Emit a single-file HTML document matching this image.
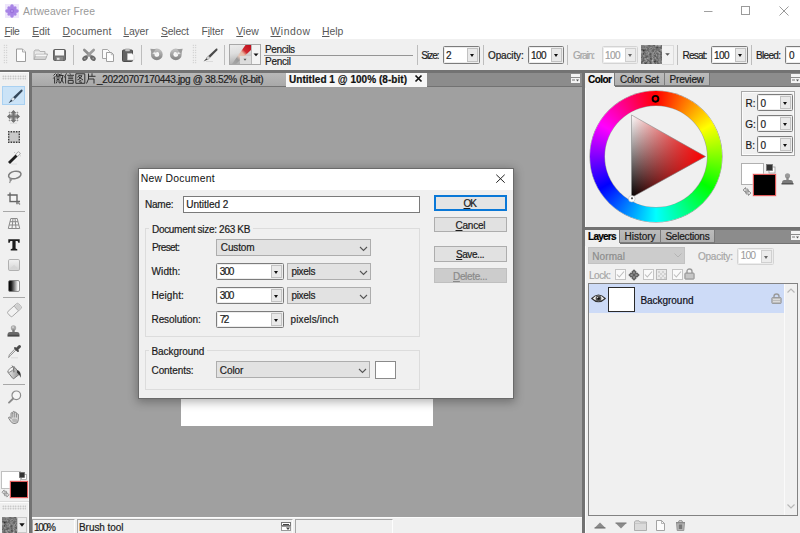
<!DOCTYPE html>
<html><head><meta charset="utf-8"><title>Artweaver Free</title>
<style>
*{box-sizing:border-box;margin:0;padding:0}
html,body{width:800px;height:533px;overflow:hidden;background:#fff}
body{font-family:"Liberation Sans",sans-serif;font-size:10px;color:#1c1c1c;position:relative}
.a{position:absolute}
.t{position:absolute;white-space:nowrap;-webkit-text-stroke:0.200px currentColor}
u{text-decoration:underline;text-underline-offset:0.500px;text-decoration-thickness:1px}
svg{position:absolute;overflow:visible}
.inp{position:absolute;background:#fff;border:1px solid #7c7c7c;border-radius:1.500px;box-shadow:inset 0 0 0 1px #ececec}
.inp i{position:absolute;right:1px;top:1px;bottom:1px;width:11px;background:#e9e9e9;border:1px solid #c2c2c2}
.inp i:after{content:"";position:absolute;left:1.700px;top:4.600px;border:2.800px solid transparent;border-top:3px solid #111;border-bottom:0}
.inp.dis{border-color:#d4d4d4}
.inp.dis i{background:#ececec;border-color:#d0d0d0}
.inp.dis i:after{border-top-color:#666}
.sep{position:absolute;top:45px;width:1px;height:20px;background:#bdbdbd}
.cb{position:absolute;background:#e2e2e2;border:1px solid #adadad}
.btn{position:absolute;background:#e1e1e1;border:1px solid #adadad}
.grp{position:absolute;border:1px solid #dcdcdc}
.tab{position:absolute;top:0;height:13px;margin-top:1px;background:linear-gradient(#bcbcbc,#b0b0b0);border-right:1px solid #787878;border-bottom:1px solid #7c7c7c;box-shadow:-1px 0 0 #7c7c7c}
.tab.on{background:#f0f0f0;border:0;height:14px;box-shadow:none}
.sf{border-top:1px solid #a6a6a6;border-left:1px solid #a6a6a6;border-right:1px solid #fdfdfd;background:#f0f0f0}
.grip{width:5px;height:20px;background-image:radial-gradient(circle,#bcbcbc 0.600px,transparent 0.850px);background-size:2.500px 2.500px;}
.ck{position:absolute;width:11px;height:11px;background:#fafafa;border:1px solid #c4c4c4}
.hgrip{height:5px;background-image:radial-gradient(circle,#b4b4b4 0.700px,transparent 0.900px);background-size:2.500px 2.500px}

</style></head><body>
<!-- ===== title bar ===== -->
<div class="a" style="left:0;top:0;width:800px;height:39px;background:#fff"></div>
<svg style="left:5px;top:4px" width="14" height="14" viewBox="0 0 14 14">
  <rect x="0" y="0" width="14" height="14" fill="#eee6fb"/>
  <g fill="#a884e6"><ellipse cx="7" cy="3.300" rx="1.900" ry="3"/><ellipse cx="7" cy="10.700" rx="1.900" ry="3"/><ellipse cx="3.300" cy="7" rx="3" ry="1.900"/><ellipse cx="10.700" cy="7" rx="3" ry="1.900"/>
  <ellipse cx="7" cy="3.600" rx="1.700" ry="2.700" transform="rotate(45 7 7)"/><ellipse cx="7" cy="3.600" rx="1.700" ry="2.700" transform="rotate(135 7 7)"/><ellipse cx="7" cy="3.600" rx="1.700" ry="2.700" transform="rotate(225 7 7)"/><ellipse cx="7" cy="3.600" rx="1.700" ry="2.700" transform="rotate(315 7 7)"/></g>
  <circle cx="7" cy="7" r="2.200" fill="#9a72dc"/><circle cx="7" cy="7" r="0.900" fill="#b99af0"/>
</svg>
<div class="t" style="left:23.00px;top:4.90px;font-size:10.4px;line-height:13px;color:#9a9a9a;letter-spacing:0.075px;-webkit-text-stroke:0;">Artweaver Free</div>
<!-- window controls -->
<svg style="left:700px;top:0" width="100" height="22" viewBox="0 0 100 22">
  <line x1="4" y1="11.500" x2="12.500" y2="11.500" stroke="#a0a0a0" stroke-width="1"/>
  <rect x="41.5" y="6.500" width="8" height="8" fill="none" stroke="#9a9a9a" stroke-width="1"/>
  <path d="M79.500 6.500 L88.500 15.500 M88.500 6.500 L79.500 15.500" stroke="#9a9a9a" stroke-width="1" fill="none"/>
</svg>
<!-- ===== menu ===== -->
<div class="t" style="left:4.50px;top:25.20px;font-size:10.4px;line-height:13px;color:#585858;letter-spacing:-0.489px;-webkit-text-stroke:0;"><u>F</u>ile</div>
<div class="t" style="left:32.20px;top:25.20px;font-size:10.4px;line-height:13px;color:#585858;letter-spacing:-0.041px;-webkit-text-stroke:0;"><u>E</u>dit</div>
<div class="t" style="left:62.60px;top:25.20px;font-size:10.4px;line-height:13px;color:#585858;letter-spacing:0.218px;-webkit-text-stroke:0;"><u>D</u>ocument</div>
<div class="t" style="left:123.40px;top:25.20px;font-size:10.4px;line-height:13px;color:#585858;letter-spacing:-0.200px;-webkit-text-stroke:0;"><u>L</u>ayer</div>
<div class="t" style="left:161.00px;top:25.20px;font-size:10.4px;line-height:13px;color:#585858;letter-spacing:-0.178px;-webkit-text-stroke:0;"><u>S</u>elect</div>
<div class="t" style="left:201.40px;top:25.20px;font-size:10.4px;line-height:13px;color:#585858;letter-spacing:-0.102px;-webkit-text-stroke:0;">F<u>i</u>lter</div>
<div class="t" style="left:236.30px;top:25.20px;font-size:10.4px;line-height:13px;color:#585858;letter-spacing:0.052px;-webkit-text-stroke:0;"><u>V</u>iew</div>
<div class="t" style="left:270.50px;top:25.20px;font-size:10.4px;line-height:13px;color:#585858;letter-spacing:0.506px;-webkit-text-stroke:0;"><u>W</u>indow</div>
<div class="t" style="left:322.00px;top:25.20px;font-size:10.4px;line-height:13px;color:#585858;letter-spacing:-0.030px;-webkit-text-stroke:0;"><u>H</u>elp</div>
<!-- ===== toolbar ===== -->
<div class="a" id="tb" style="left:0;top:39px;width:800px;height:31px;background:#f0f0f0"></div>
<!-- grips -->
<div class="a grip" style="left:3px;top:44px"></div>
<div class="a grip" style="left:192px;top:44px"></div>
<div class="sep" style="left:73px"></div>
<div class="sep" style="left:141px"></div>
<div class="sep" style="left:224px"></div>
<div class="sep" style="left:417px"></div>
<div class="sep" style="left:483px"></div>
<div class="sep" style="left:567px"></div>
<div class="sep" style="left:677px"></div>
<div class="sep" style="left:751px"></div>
<!-- new -->
<svg style="left:16px;top:48px" width="11" height="14" viewBox="0 0 11 14"><path d="M0.500 1 L6.500 1 L9.500 4 L9.500 13.500 L0.500 13.500 Z" fill="#fdfdfd" stroke="#9c9c9c" stroke-width="1"/><path d="M6.500 1 L6.500 4 L9.500 4" fill="#eee" stroke="#9c9c9c" stroke-width="0.800"/></svg>
<!-- open -->
<svg style="left:33px;top:49px" width="15" height="12" viewBox="0 0 15 12"><path d="M1 10.500 L1 2.500 L2 1 L6 1 L7 2.500 L12 2.500 L12 5" fill="#e0e0e0" stroke="#b4b4b4" stroke-width="1"/><path d="M1 10.500 L3 5 L14.500 5 L12.500 10.500 Z" fill="#d2d2d2" stroke="#aeaeae" stroke-width="1"/><path d="M2.500 6.300 L13.500 6.300" stroke="#f6f6f6" stroke-width="1.400"/><path d="M2 4 L11 4" stroke="#f4f4f4" stroke-width="1"/></svg>
<!-- save -->
<svg style="left:53px;top:49px" width="13" height="12" viewBox="0 0 13 12"><rect x="0.500" y="0.500" width="12" height="11" rx="1.200" fill="#747474" stroke="#606060" stroke-width="1"/><rect x="2" y="1" width="9" height="5.500" fill="#f6f6f6"/><rect x="3" y="8" width="7" height="3.500" fill="#8a8a8a"/><rect x="4" y="8.800" width="2.500" height="2" fill="#e0e0e0"/></svg>
<!-- cut -->
<svg style="left:82px;top:49px" width="14" height="12" viewBox="0 0 14 12"><path d="M2.300 1 L9.800 8" stroke="#8e8e8e" stroke-width="2.600" stroke-linecap="round"/><path d="M11.700 1 L4.200 8" stroke="#9c9c9c" stroke-width="2.600" stroke-linecap="round"/><ellipse cx="3" cy="9.200" rx="3" ry="2.300" transform="rotate(-40 3 9.200)" fill="#686868"/><ellipse cx="11" cy="9.200" rx="3" ry="2.300" transform="rotate(40 11 9.200)" fill="#686868"/><circle cx="2.800" cy="9.400" r="0.900" fill="#9c9c9c"/><circle cx="11.200" cy="9.400" r="0.900" fill="#9c9c9c"/></svg>
<!-- copy -->
<svg style="left:102px;top:49px" width="13" height="13" viewBox="0 0 13 13"><path d="M0.500 0.500 L5.500 0.500 L7.500 2.500 L7.500 9.500 L0.500 9.500 Z" fill="#fbfbfb" stroke="#a6a6a6" stroke-width="1"/><path d="M4.500 3.500 L9.500 3.500 L11.500 5.500 L11.500 12.500 L4.500 12.500 Z" fill="#fdfdfd" stroke="#a0a0a0" stroke-width="1"/><path d="M9.300 3.500 L9.300 5.700 L11.500 5.700" fill="none" stroke="#a0a0a0" stroke-width="0.700"/></svg>
<!-- paste -->
<svg style="left:122px;top:49px" width="13" height="13" viewBox="0 0 13 13"><rect x="0.500" y="1" width="10" height="11.500" rx="1" fill="#636363" stroke="#4c4c4c" stroke-width="1"/><rect x="3" y="0" width="5" height="2.200" rx="0.800" fill="#d0d0d0" stroke="#777" stroke-width="0.500"/><path d="M5.500 4.500 L10 4.500 L12 6.500 L12 11 L5.500 11 Z" fill="#fbfbfb" stroke="#c8c8c8" stroke-width="0.600"/></svg>
<!-- undo -->
<svg style="left:150px;top:47px" width="14" height="14" viewBox="0 0 14 14"><defs><linearGradient id="ug" x1="0" y1="0" x2="0" y2="1"><stop offset="0" stop-color="#bcbcbc"/><stop offset="1" stop-color="#8a8a8a"/></linearGradient></defs><circle cx="6.800" cy="7.400" r="4" fill="#f2f2f2" stroke="url(#ug)" stroke-width="3.800"/><path d="M6.800 5.600 A1.800 1.800 0 1 1 5 7.400" fill="none" stroke="#fafafa" stroke-width="1.300"/><path d="M0.300 1.800 L5.800 2.200 L1.800 7.200 Z" fill="#9c9c9c"/><path d="M2.200 6.200 L5.500 7.600 L5.200 5 Z" fill="#efefef"/></svg>
<!-- redo -->
<svg style="left:169px;top:47px" width="14" height="14" viewBox="0 0 14 14"><circle cx="6.800" cy="7.400" r="4" fill="#f2f2f2" stroke="url(#ug)" stroke-width="3.800"/><path d="M6.800 5.600 A1.800 1.800 0 1 0 8.600 7.400" fill="none" stroke="#fafafa" stroke-width="1.300"/><path d="M13.700 1.800 L8.200 2.200 L12.200 7.200 Z" fill="#9c9c9c"/><path d="M11.800 6.200 L8.500 7.600 L8.800 5 Z" fill="#efefef"/></svg>
<!-- brush -->
<svg style="left:203px;top:48px" width="15" height="14" viewBox="0 0 15 14"><path d="M14.200 0.600 L13.200 0.400 L5 8.200 L6.700 9.900 L14.600 1.900 Z" fill="#4a4a4a"/><path d="M5.300 7.900 L3.200 10 L4.900 11.700 L7 9.600 Z" fill="#d4d4d4" stroke="#8a8a8a" stroke-width="0.500"/><path d="M3.400 10.200 L0.600 13.600 L4.700 11.500 Z" fill="#444"/><path d="M3 13.500 L10 13.500" stroke="#d4d4d4" stroke-width="0.800"/></svg>

<!-- brush preset -->
<div class="a" style="left:229px;top:44px;width:32px;height:21px;border:1px solid #a8a8a8;background:#f4f4f4"></div>
<div class="a" style="left:230px;top:45px;width:21px;height:19px;background:linear-gradient(170deg,#ececec 0%,#dedede 40%,#a4a4a4 100%)"></div>
<svg style="left:230px;top:45px" width="21" height="19" viewBox="0 0 21 19">
  <defs><linearGradient id="pg" x1="20" y1="0" x2="2" y2="19" gradientUnits="userSpaceOnUse"><stop offset="0" stop-color="#c00f1e"/><stop offset="0.300" stop-color="#cf2a30"/><stop offset="0.420" stop-color="#e9b9a4"/><stop offset="0.600" stop-color="#e2c8bc"/><stop offset="0.720" stop-color="#9a9a9a"/><stop offset="1" stop-color="#a8a8a8"/></linearGradient></defs>
  <path d="M15.500 0 L21 0 L21 5 L6 19 L2 19 Z" fill="url(#pg)"/>
  <rect x="10" y="11" width="11" height="8" fill="#dcdcdc"/>
  <path d="M13.500 13.800 l3 0 l-1.500 2 z" fill="#555"/>
</svg>
<div class="a" style="left:251px;top:45px;width:1px;height:19px;background:#b8b8b8"></div>
<svg style="left:252px;top:45px" width="8" height="19" viewBox="0 0 8 19"><path d="M1.500 8.500 L6.500 8.500 L4 11.200 Z" fill="#111"/></svg>
<div class="t" style="left:265.00px;top:43.03px;font-size:10px;line-height:13px;color:#1c1c1c;letter-spacing:-0.375px;">Pencils</div>
<div class="t" style="left:265.00px;top:54.53px;font-size:10px;line-height:13px;color:#1c1c1c;letter-spacing:-0.250px;">Pencil</div>
<div class="a" style="left:264px;top:54.5px;width:149px;height:1px;background:#959595"></div>
<div class="t" style="left:421.30px;top:49.03px;font-size:10px;line-height:13px;color:#1c1c1c;letter-spacing:-1.009px;">Size:</div>
<div class="inp" style="left:443px;top:46px;width:37px;height:18px"><i></i></div>
<div class="t" style="left:446.00px;top:49.03px;font-size:10px;line-height:13px;color:#1c1c1c;">2</div>
<div class="t" style="left:488.00px;top:49.03px;font-size:10px;line-height:13px;color:#1c1c1c;letter-spacing:-0.134px;">Opacity:</div>
<div class="inp" style="left:528px;top:46px;width:36px;height:18px"><i></i></div>
<div class="t" style="left:531.00px;top:49.03px;font-size:10px;line-height:13px;color:#1c1c1c;letter-spacing:-0.594px;">100</div>
<div class="t" style="left:573.00px;top:49.03px;font-size:10px;line-height:13px;color:#a6a6a6;letter-spacing:-1.047px;">Grain:</div>
<div class="inp dis" style="left:602px;top:46px;width:36px;height:18px"><i></i></div>
<div class="t" style="left:605.00px;top:49.03px;font-size:10px;line-height:13px;color:#a0a0a0;letter-spacing:-0.594px;">100</div>
<svg style="left:0;top:0" width="0" height="0"><defs>
<filter id="nz" x="0" y="0" width="100%" height="100%" color-interpolation-filters="sRGB"><feTurbulence type="fractalNoise" baseFrequency="0.450" numOctaves="2" seed="7" result="n"/><feColorMatrix type="matrix" values="0.360 0.360 0.360 0 -0.070  0.360 0.360 0.360 0 -0.070  0.360 0.360 0.360 0 -0.070  0 0 0 0 1"/></filter></defs></svg>
<svg style="left:641px;top:45px" width="22" height="19" viewBox="0 0 22 19"><rect x="0" y="0" width="22" height="19" fill="#808080" filter="url(#nz)"/></svg>

<div class="a" style="left:662px;top:45px;width:12px;height:20px;border:1px solid #dcdcdc;border-left:0;background:#f2f2f2"></div><svg style="left:663px;top:45px" width="10" height="19" viewBox="0 0 10 19"><path d="M2.200 8.300 L6.800 8.300 L4.500 10.700 Z" fill="#555"/></svg>
<div class="t" style="left:682.50px;top:49.03px;font-size:10px;line-height:13px;color:#1c1c1c;letter-spacing:-0.781px;">Resat:</div>
<div class="inp" style="left:711px;top:46px;width:37px;height:18px"><i></i></div>
<div class="t" style="left:714.00px;top:49.03px;font-size:10px;line-height:13px;color:#1c1c1c;letter-spacing:-0.594px;">100</div>
<div class="t" style="left:756.00px;top:49.03px;font-size:10px;line-height:13px;color:#1c1c1c;letter-spacing:-0.672px;">Bleed:</div>
<div class="inp" style="left:785px;top:46px;width:37px;height:18px"><i></i></div>
<div class="t" style="left:789.00px;top:49.03px;font-size:10px;line-height:13px;color:#1c1c1c;">0</div>
<!-- ===== work area bg ===== -->
<div class="a" style="left:0;top:70px;width:800px;height:463px;background:#727272"></div>
<!-- toolbox -->
<div class="a" style="left:0;top:72px;width:29px;height:461px;background:#f0f0f0;border-right:1px solid #fafafa;border-top:1px solid #fbfbfb"></div>
<!-- doc tab bar -->
<div class="a" style="left:32px;top:73px;width:550px;height:13px;background:#8c8c8c"></div>
<div class="a" style="left:32px;top:73px;width:254px;height:13px;background:linear-gradient(#b8b8b8,#a8a8a8)"></div>
<div class="a" style="left:286px;top:73px;width:141px;height:14px;background:#f6f6f6"></div>
<!-- canvas -->
<div class="a" style="left:32px;top:87px;width:550px;height:430px;background:#a0a0a0"></div>
<div class="a" style="left:181px;top:176px;width:252px;height:250px;background:#fff"></div>
<svg style="left:53px;top:73px" width="44" height="11" viewBox="0 0 44 11" fill="none" stroke="#2a2a2a" stroke-width="0.950">
  <!-- wei -->
  <path d="M2.500 0.500 L0.500 2.500 M2.500 3 L0.300 5.500 M1.600 4.500 L1.600 10.500"/>
  <path d="M3.500 1 L3.500 3.300 L6.500 3.300 L6.500 1 M5 0.300 L5 3.300 M3.200 5 L6.800 5 M4 6.500 L4 8.500 L3.200 10.300 M4 6.500 L6 6.500 L6 9.800 L6.800 9.800"/>
  <path d="M8.200 0.500 L7.300 3.500 M7.800 2.500 L10.500 2.500 M9.800 2.500 L9.300 6 L7.200 10.300 M7.900 4.500 L10.500 10.300"/>
  <!-- xin -->
  <g transform="translate(11 0)"><path d="M2.500 0.300 L0.300 4.500 M1.600 3.300 L1.600 10.500 M5.800 0.300 L6.500 1.500 M3.300 2.300 L10 2.300 M4.200 4 L9.200 4 M4.200 5.700 L9.200 5.700 M4.200 7.400 L9.200 7.400 L9.200 10.300 L4.200 10.300 Z"/></g>
  <!-- tu -->
  <g transform="translate(22 0)"><path d="M0.800 0.800 L9.800 0.800 L9.800 10.300 L0.800 10.300 Z M4.500 2 L2.500 4.500 M4 2.800 L7 2.800 L5 5.500 L2.300 7 M3.800 4 L8 7 M4.500 7.300 L6.300 8 M3.800 8.600 L6.800 9.500"/></g>
  <!-- pian -->
  <g transform="translate(33 0)"><path d="M2.500 0.500 L2.500 6 L0.500 10.500 M2.500 3.300 L9.500 3.300 M6 0.300 L6 3.300 M2.500 6 L8 6 L8 10.500"/></g>
</svg>

<div class="t" style="left:97.00px;top:73.03px;font-size:10px;line-height:13px;color:#222;letter-spacing:-0.330px;">_20220707170443.jpg @ 38.52% (8-bit)</div>
<div class="t" style="left:289.00px;top:73.03px;font-size:10px;line-height:13px;color:#111;letter-spacing:0.042px;font-weight:bold;">Untitled 1 @ 100% (8-bit)</div>
<svg style="left:414px;top:74px" width="9" height="9" viewBox="0 0 9 9"><path d="M1.500 1.500 L7.500 7.500 M7.500 1.500 L1.500 7.500" stroke="#111" stroke-width="1.700" fill="none"/></svg>
<svg class="pm" style="left:571px;top:74px" width="9" height="9" viewBox="0 0 9 9"><rect x="0" y="0" width="9" height="3" fill="#f4f4f4"/><rect x="0" y="4" width="9" height="5" fill="#f4f4f4"/><rect x="1" y="5.500" width="3" height="1" fill="#777"/><path d="M5 5.500 l3 0 l-1.500 2 z" fill="#555"/></svg>
<!-- ===== status bar ===== -->
<div class="a" style="left:32px;top:517px;width:550px;height:16px;background:#f0f0f0;border-top:1px solid #fbfbfb"></div>
<div class="a sf" style="left:32px;top:519px;width:43px;height:14px"></div>
<div class="a sf" style="left:77px;top:519px;width:216px;height:14px"></div>
<div class="a sf" style="left:295px;top:519px;width:98px;height:14px"></div>
<div class="t" style="left:34.00px;top:520.74px;font-size:10px;line-height:13px;color:#1c1c1c;letter-spacing:-1.193px;">100%</div>
<div class="t" style="left:79.00px;top:520.74px;font-size:10px;line-height:13px;color:#1c1c1c;letter-spacing:-0.059px;">Brush tool</div>
<svg style="left:281px;top:522px" width="10" height="9" viewBox="0 0 10 9"><rect x="0.500" y="0.500" width="9" height="3" fill="#fff" stroke="#777" stroke-width="1"/><rect x="0.500" y="4.500" width="9" height="4" fill="#fff" stroke="#999" stroke-width="1"/><rect x="2" y="2" width="6" height="1" fill="#444"/><path d="M5 5.500 l4 0 l-2 2.500 z" fill="#444"/></svg>
<!-- ===== right panel: Color ===== -->
<div class="a" style="left:585px;top:73px;width:215px;height:13px;background:#8c8c8c"></div>
<div class="a" style="left:585px;top:87px;width:215px;height:140px;background:#f0f0f0;border-left:1px solid #fcfcfc"></div>
<div class="tab on" style="left:585px;top:72px;width:30px;height:15px"></div>
<div class="tab" style="left:615px;top:72px;width:50px"></div>
<div class="tab" style="left:665px;top:72px;width:45px"></div>
<div class="t" style="left:588.00px;top:73.03px;font-size:10px;line-height:13px;color:#000;letter-spacing:-0.527px;font-weight:bold;">Color</div>
<div class="t" style="left:620.00px;top:73.03px;font-size:10px;line-height:13px;color:#1a1a1a;letter-spacing:-0.336px;">Color Set</div>
<div class="t" style="left:669.50px;top:73.03px;font-size:10px;line-height:13px;color:#1a1a1a;letter-spacing:-0.180px;">Preview</div>
<svg class="pm" style="left:791px;top:74px" width="9" height="9" viewBox="0 0 9 9"><rect x="0" y="0" width="9" height="3" fill="#f4f4f4"/><rect x="0" y="4" width="9" height="5" fill="#f4f4f4"/><rect x="1" y="5.500" width="3" height="1" fill="#777"/><path d="M5 5.500 l3 0 l-1.500 2 z" fill="#555"/></svg>
<!-- wheel -->
<div class="a" style="left:589.500px;top:91.200px;width:132.300px;height:130.400px;border-radius:50%;background:conic-gradient(from 0deg,#ff0000,#ff8000 30deg,#ffff00 60deg,#80ff00 90deg,#00ff00 120deg,#00ff80 150deg,#00ffff 180deg,#0080ff 210deg,#0000ff 240deg,#8000ff 270deg,#ff00ff 300deg,#ff0080 330deg,#ff0000 360deg);box-shadow:0 0 0 0.500px #8a8a8a"></div>
<div class="a" style="left:604.600px;top:106.300px;width:102px;height:101.200px;border-radius:50%;background:#f0f0f0;box-shadow:0 0 0 0.500px #9a9a9a"></div>
<svg style="left:585px;top:86px" width="140" height="140" viewBox="585 86 140 140">
  <defs>
    <linearGradient id="gv" x1="0" y1="115" x2="0" y2="197" gradientUnits="userSpaceOnUse"><stop offset="0" stop-color="#fff"/><stop offset="1" stop-color="#000"/></linearGradient>
    <linearGradient id="gh" x1="631" y1="0" x2="705" y2="0" gradientUnits="userSpaceOnUse"><stop offset="0" stop-color="#ff0000" stop-opacity="0"/><stop offset="1" stop-color="#ff0000" stop-opacity="1"/></linearGradient>
  </defs>
  <polygon points="631.500,115 705.500,156.500 631.500,197.500" fill="url(#gv)"/>
  <polygon points="631.500,115 705.500,156.500 631.500,197.500" fill="url(#gh)"/>
  <polygon points="631.500,115 705.500,156.500 631.500,197.500" fill="none" stroke="#8a8a8a" stroke-width="0.600"/>
  <circle cx="655.500" cy="98.800" r="2.900" fill="none" stroke="#000" stroke-width="1.900"/>
  <circle cx="631.800" cy="198.800" r="3.300" fill="#fff" stroke="#b0b0b0" stroke-width="0.500"/>
  <circle cx="632" cy="198.300" r="1.100" fill="#555"/>
</svg>
<!-- RGB box -->
<div class="a" style="left:741px;top:91px;width:54px;height:65px;border:1px solid #a8a8a8;box-shadow:inset 0 0 0 1px #fbfbfb"></div>
<div class="inp" style="left:757px;top:94px;width:36px;height:17px"><i></i></div>
<div class="inp" style="left:757px;top:115px;width:36px;height:17px"><i></i></div>
<div class="inp" style="left:757px;top:136px;width:36px;height:17px"><i></i></div>
<div class="t" style="left:745.60px;top:96.83px;font-size:10px;line-height:13px;color:#1c1c1c;">R:</div>
<div class="t" style="left:745.20px;top:117.83px;font-size:10px;line-height:13px;color:#1c1c1c;">G:</div>
<div class="t" style="left:745.60px;top:138.84px;font-size:10px;line-height:13px;color:#1c1c1c;">B:</div>
<div class="t" style="left:760.50px;top:96.83px;font-size:10px;line-height:13px;color:#1c1c1c;">0</div>
<div class="t" style="left:760.50px;top:117.83px;font-size:10px;line-height:13px;color:#1c1c1c;">0</div>
<div class="t" style="left:760.50px;top:138.84px;font-size:10px;line-height:13px;color:#1c1c1c;">0</div>
<!-- swatches -->
<div class="a" style="left:741px;top:163px;width:23px;height:22px;background:#fff;border:1px solid #b0b0b0"></div>
<div class="a" style="left:753px;top:174px;width:23px;height:22px;background:#000;border:1px solid #e05a5a;box-shadow:0 0 0 0.500px #f0c0c0"></div>
<svg style="left:766px;top:164px" width="9" height="9" viewBox="0 0 9 9"><rect x="3" y="3" width="6" height="6" fill="#fff" stroke="#999" stroke-width="0.800"/><rect x="0.500" y="0.500" width="6" height="6" fill="#333" stroke="#777" stroke-width="0.800"/></svg>
<svg style="left:742px;top:187px" width="10" height="9" viewBox="0 0 10 9"><path d="M1 3 L3.500 0.500 L3.500 2 L6 2 L6 4 L3.500 4 L3.500 5.500 Z" fill="#d8d8d8" stroke="#777" stroke-width="0.700"/><path d="M9 6 L6.500 8.500 L6.500 7 L4 7 L4 5 L6.500 5 L6.500 3.500 Z" fill="#d8d8d8" stroke="#777" stroke-width="0.700"/></svg>
<svg style="left:781px;top:173px" width="13" height="12" viewBox="0 0 13 12"><circle cx="6.500" cy="2.800" r="2.600" fill="#9a9a9a"/><rect x="5.300" y="4" width="2.400" height="4" fill="#8a8a8a"/><path d="M1 10 Q1 7 3.500 7 L9.500 7 Q12 7 12 10 Z" fill="#7a7a7a"/><rect x="0.500" y="10" width="12" height="1.500" fill="#555"/></svg>
<!-- ===== right panel: Layers ===== -->
<div class="a" style="left:585px;top:230px;width:215px;height:13px;background:#8c8c8c"></div>
<div class="a" style="left:585px;top:244px;width:215px;height:289px;background:#f0f0f0;border-left:1px solid #fcfcfc"></div>
<div class="tab on" style="left:585px;top:229px;width:35px;height:16px"></div>
<div class="tab" style="left:620px;top:229px;width:41px"></div>
<div class="tab" style="left:661px;top:229px;width:54px"></div>
<div class="t" style="left:588.00px;top:229.94px;font-size:10px;line-height:13px;color:#000;letter-spacing:-0.730px;font-weight:bold;">Layers</div>
<div class="t" style="left:624.60px;top:229.94px;font-size:10px;line-height:13px;color:#1a1a1a;letter-spacing:-0.021px;">History</div>
<div class="t" style="left:665.40px;top:229.94px;font-size:10px;line-height:13px;color:#1a1a1a;letter-spacing:-0.205px;">Selections</div>
<svg class="pm" style="left:791px;top:231px" width="9" height="9" viewBox="0 0 9 9"><rect x="0" y="0" width="9" height="3" fill="#f4f4f4"/><rect x="0" y="4" width="9" height="5" fill="#f4f4f4"/><rect x="1" y="5.500" width="3" height="1" fill="#777"/><path d="M5 5.500 l3 0 l-1.500 2 z" fill="#555"/></svg>
<div class="a" style="left:588px;top:247px;width:97px;height:17px;background:#cccccc;border:1px solid #c2c2c2"></div>
<svg style="left:674px;top:253px" width="8" height="5" viewBox="0 0 8 5"><path d="M0.500 0.500 L4 4 L7.500 0.500" fill="none" stroke="#b4b4b4" stroke-width="1"/></svg>
<div class="t" style="left:592.20px;top:250.03px;font-size:10px;line-height:13px;color:#8c8c8c;letter-spacing:0.113px;">Normal</div>
<div class="t" style="left:698.00px;top:250.03px;font-size:10px;line-height:13px;color:#a6a6a6;letter-spacing:-0.241px;">Opacity:</div>
<div class="inp dis" style="left:737px;top:248px;width:37px;height:17px"><i></i></div>
<div class="t" style="left:740.60px;top:249.40px;font-size:10.4px;line-height:13px;color:#9a9a9a;letter-spacing:-0.922px;-webkit-text-stroke:0;">100</div>
<div class="t" style="left:589.00px;top:268.54px;font-size:10px;line-height:13px;color:#a6a6a6;letter-spacing:-0.477px;">Lock:</div>
<div class="ck" style="left:615px;top:269px"></div><svg style="left:615px;top:269px" width="11" height="11" viewBox="0 0 11 11"><path d="M2 5.500 L4.300 8 L9 2.500" fill="none" stroke="#bdbdbd" stroke-width="1.100"/></svg>
<div class="ck" style="left:643px;top:269px"></div><svg style="left:643px;top:269px" width="11" height="11" viewBox="0 0 11 11"><path d="M2 5.500 L4.300 8 L9 2.500" fill="none" stroke="#bdbdbd" stroke-width="1.100"/></svg>
<div class="ck" style="left:672px;top:269px"></div><svg style="left:672px;top:269px" width="11" height="11" viewBox="0 0 11 11"><path d="M2 5.500 L4.300 8 L9 2.500" fill="none" stroke="#bdbdbd" stroke-width="1.100"/></svg>
<svg style="left:627.500px;top:268.500px" width="12" height="12" viewBox="0 0 12 12"><path d="M6 0.300 L11.700 6 L6 11.700 L0.300 6 Z" fill="#5e5e5e"/><path d="M6 2.600 L6 9.400 M2.600 6 L9.400 6" stroke="#bdbdbd" stroke-width="1"/><circle cx="6" cy="6" r="1.400" fill="#5e5e5e"/><path d="M4.100 4.100 L3.300 3.300 M7.900 4.100 L8.700 3.300 M4.100 7.900 L3.300 8.700 M7.900 7.900 L8.700 8.700" stroke="#d8d8d8" stroke-width="0.900"/></svg>
<svg style="left:656px;top:269px" width="11" height="11" viewBox="0 0 11 11"><rect x="0.500" y="0.500" width="10" height="10" fill="#e9e9e9" stroke="#b8b8b8"/><path d="M2 2h2v2h-2z M6 2h2v2h-2z M4 4h2v2h-2z M8 4h2v2h-2z M2 6h2v2h-2z M6 6h2v2h-2z M4 8h2v2h-2z M8 8h2v2h-2z" fill="#d2d2d2"/></svg>
<svg style="left:684px;top:268px" width="11" height="12" viewBox="0 0 11 12"><path d="M3 5 L3 3.500 Q3 1 5.500 1 Q8 1 8 3.500 L8 5" fill="none" stroke="#9c9c9c" stroke-width="1.400"/><rect x="0.800" y="5" width="9.400" height="6.200" rx="0.800" fill="#b8b8b8" stroke="#8e8e8e" stroke-width="0.800"/><path d="M2 7 L9 7 M2 9 L9 9" stroke="#dcdcdc" stroke-width="0.800"/></svg>

<!-- layer list -->
<div class="a" style="left:588px;top:283px;width:210px;height:233px;background:#f0f0f0;border:1px solid #828282"></div>
<div class="a" style="left:589px;top:284px;width:195px;height:29px;background:#cddbf7"></div>
<div class="a" style="left:784px;top:284px;width:1px;height:231px;background:#fafafa"></div>
<div class="a" style="left:608px;top:287px;width:27px;height:25px;background:#fff;border:1px solid #2a2a2a"></div>
<div class="t" style="left:640.40px;top:293.54px;font-size:10px;line-height:13px;color:#10101a;letter-spacing:-0.031px;">Background</div>
<svg style="left:787px;top:288px" width="8" height="5" viewBox="0 0 8 5"><path d="M0.500 4.500 L4 1 L7.500 4.500" fill="none" stroke="#b8b8b8" stroke-width="1.200"/></svg>
<svg style="left:787px;top:504px" width="8" height="5" viewBox="0 0 8 5"><path d="M0.500 0.500 L4 4 L7.500 0.500" fill="none" stroke="#b8b8b8" stroke-width="1.200"/></svg>
<!-- eye -->
<svg style="left:591px;top:293px" width="15" height="11" viewBox="0 0 15 11"><path d="M0.800 5.500 Q7.500 -1.500 14.200 5.500 Q7.500 12 0.800 5.500 Z" fill="#f4f4f4" stroke="#333" stroke-width="1.100"/><circle cx="7.500" cy="5.500" r="2.900" fill="#555"/><circle cx="7.500" cy="5.500" r="1.300" fill="#111"/><circle cx="6.600" cy="4.600" r="0.700" fill="#ddd"/></svg>
<!-- row lock -->
<svg style="left:771px;top:293px" width="11" height="11" viewBox="0 0 11 11"><path d="M3 4.500 L3 3.300 Q3 1 5.500 1 Q8 1 8 3.300 L8 4.500" fill="none" stroke="#9a9a9a" stroke-width="1.400"/><rect x="0.800" y="4.500" width="9.400" height="6" rx="0.800" fill="#bcbcbc" stroke="#909090" stroke-width="0.800"/><path d="M2 6.500 L9 6.500 M2 8.500 L9 8.500" stroke="#e2e2e2" stroke-width="0.800"/></svg>
<!-- bottom icons -->
<svg style="left:594px;top:522px" width="12" height="7" viewBox="0 0 12 7"><path d="M6 0.500 L11.500 6 L0.500 6 Z" fill="#8a8a8a"/><path d="M0.500 6 L11.500 6" stroke="#666" stroke-width="1"/></svg>
<svg style="left:615px;top:522px" width="12" height="7" viewBox="0 0 12 7"><path d="M6 6.500 L11.500 1 L0.500 1 Z" fill="#8a8a8a"/><path d="M0.500 1 L11.500 1" stroke="#777" stroke-width="1"/></svg>
<svg style="left:634px;top:520px" width="13" height="11" viewBox="0 0 13 11"><path d="M0.500 10.500 L0.500 2 L1.500 0.800 L5 0.800 L6 2 L12.500 2 L12.500 10.500 Z" fill="#dadada" stroke="#a8a8a8" stroke-width="0.900"/><path d="M0.500 3.500 L12.500 3.500" stroke="#c0c0c0" stroke-width="0.700"/></svg>
<svg style="left:656px;top:520px" width="9" height="11" viewBox="0 0 9 11"><path d="M0.500 0.500 L5.500 0.500 L8.500 3.500 L8.500 10.500 L0.500 10.500 Z" fill="#fcfcfc" stroke="#9a9a9a" stroke-width="0.900"/><path d="M5.500 0.500 L5.500 3.500 L8.500 3.500" fill="none" stroke="#9a9a9a" stroke-width="0.700"/></svg>
<svg style="left:675px;top:520px" width="11" height="11" viewBox="0 0 11 11"><path d="M1 2.500 L10 2.500 M3.500 2.500 L4 0.800 L7 0.800 L7.500 2.500" fill="none" stroke="#888" stroke-width="1"/><path d="M1.500 3 L2.200 10.500 L8.800 10.500 L9.500 3 Z" fill="#b4b4b4" stroke="#8a8a8a" stroke-width="0.800"/><rect x="3.800" y="4.500" width="3.400" height="4.500" fill="#777"/></svg>

<!-- ===== dialog ===== -->
<div class="a" style="left:138px;top:168px;width:376px;height:231px;background:#f0f0f0;border:1px solid #6a6a6a;box-shadow:0 2px 9px 1px rgba(0,0,0,0.30)"></div>
<div class="a" style="left:139px;top:169px;width:374px;height:21px;background:#fff"></div>
<div class="t" style="left:140.70px;top:171.90px;font-size:10.4px;line-height:13px;color:#111;letter-spacing:0.270px;-webkit-text-stroke:0;">New Document</div>
<svg style="left:495px;top:174px" width="11" height="10" viewBox="0 0 11 10"><path d="M1.300 0.700 L9.700 8.700 M9.700 0.700 L1.300 8.700" stroke="#222" stroke-width="1" fill="none"/></svg>
<div class="t" style="left:145.00px;top:198.13px;font-size:10px;line-height:13px;color:#1c1c1c;letter-spacing:-0.238px;">Name:</div>
<div class="a" style="left:183px;top:196px;width:237px;height:17px;background:#fff;border:1px solid #7a7a7a"></div>
<div class="t" style="left:186.30px;top:198.13px;font-size:10px;line-height:13px;color:#1c1c1c;letter-spacing:-0.028px;">Untitled 2</div>
<div class="btn" style="left:434px;top:195px;width:73px;height:16px;border:2px solid #0a78d7;background:#e4e4e4"></div>
<div class="btn" style="left:434px;top:217px;width:73px;height:15px"></div>
<div class="btn" style="left:434px;top:246px;width:73px;height:16px"></div>
<div class="btn" style="left:434px;top:268px;width:73px;height:15px;background:#cccccc;border-color:#bfbfbf"></div>
<div class="t" style="left:463.50px;top:197.03px;font-size:10px;line-height:13px;color:#1c1c1c;letter-spacing:-0.953px;"><u>O</u>K</div>
<div class="t" style="left:455.50px;top:218.84px;font-size:10px;line-height:13px;color:#1c1c1c;letter-spacing:-0.228px;"><u>C</u>ancel</div>
<div class="t" style="left:456.00px;top:248.03px;font-size:10px;line-height:13px;color:#1c1c1c;letter-spacing:-0.440px;"><u>S</u>ave...</div>
<div class="t" style="left:453.00px;top:269.54px;font-size:10px;line-height:13px;color:#8a8a8a;letter-spacing:-0.346px;"><u>D</u>elete...</div>
<!-- group 1 -->
<div class="grp" style="left:145px;top:228px;width:275px;height:109px"></div>
<div class="a" style="left:149px;top:224px;width:104px;height:10px;background:#f0f0f0"></div>
<div class="t" style="left:152.00px;top:222.53px;font-size:10px;line-height:13px;color:#1c1c1c;letter-spacing:-0.305px;">Document size: 263 KB</div>
<div class="t" style="left:152.00px;top:241.34px;font-size:10px;line-height:13px;color:#1c1c1c;letter-spacing:-0.615px;">Preset:</div>
<div class="cb" style="left:216px;top:239px;width:155px;height:17px"></div>
<div class="t" style="left:220.80px;top:241.34px;font-size:10px;line-height:13px;color:#1c1c1c;letter-spacing:-0.131px;">Custom</div>
<div class="t" style="left:151.50px;top:265.04px;font-size:10px;line-height:13px;color:#1c1c1c;letter-spacing:0.111px;">Width:</div>
<div class="inp" style="left:216px;top:263px;width:68px;height:17px"><i></i></div>
<div class="t" style="left:219.80px;top:264.94px;font-size:10px;line-height:13px;color:#1c1c1c;letter-spacing:-1.044px;">300</div>
<div class="cb" style="left:287px;top:263px;width:84px;height:17px"></div>
<div class="t" style="left:291.40px;top:265.24px;font-size:10px;line-height:13px;color:#1c1c1c;letter-spacing:-0.316px;">pixels</div>
<div class="t" style="left:151.50px;top:288.94px;font-size:10px;line-height:13px;color:#1c1c1c;letter-spacing:0.102px;">Height:</div>
<div class="inp" style="left:216px;top:287px;width:68px;height:17px"><i></i></div>
<div class="t" style="left:219.80px;top:288.84px;font-size:10px;line-height:13px;color:#1c1c1c;letter-spacing:-1.044px;">300</div>
<div class="cb" style="left:287px;top:287px;width:84px;height:17px"></div>
<div class="t" style="left:291.40px;top:289.14px;font-size:10px;line-height:13px;color:#1c1c1c;letter-spacing:-0.316px;">pixels</div>
<div class="t" style="left:151.50px;top:313.14px;font-size:10px;line-height:13px;color:#1c1c1c;letter-spacing:-0.083px;">Resolution:</div>
<div class="inp" style="left:216px;top:311px;width:68px;height:17px"><i></i></div>
<div class="t" style="left:219.80px;top:313.14px;font-size:10px;line-height:13px;color:#1c1c1c;letter-spacing:-1.525px;">72</div>
<div class="t" style="left:290.50px;top:313.14px;font-size:10px;line-height:13px;color:#1c1c1c;letter-spacing:0.130px;">pixels/inch</div>
<!-- group 2 -->
<div class="grp" style="left:145px;top:350px;width:275px;height:40px"></div>
<div class="a" style="left:149px;top:346px;width:58px;height:10px;background:#f0f0f0"></div>
<div class="t" style="left:151.50px;top:344.54px;font-size:10px;line-height:13px;color:#1c1c1c;letter-spacing:-0.064px;">Background</div>
<div class="t" style="left:151.50px;top:364.04px;font-size:10px;line-height:13px;color:#1c1c1c;letter-spacing:-0.089px;">Contents:</div>
<div class="cb" style="left:216px;top:361px;width:154px;height:17px"></div>
<div class="t" style="left:219.80px;top:364.04px;font-size:10px;line-height:13px;color:#1c1c1c;letter-spacing:-0.077px;">Color</div>
<div class="a" style="left:375px;top:361px;width:21px;height:18px;background:#fff;border:1px solid #8a8a8a"></div>
<svg class="chev" style="left:359px;top:246px" width="9" height="6" viewBox="0 0 9 6"><path d="M1 1 L4.500 4.500 L8 1" fill="none" stroke="#555" stroke-width="1.100"/></svg>
<svg class="chev" style="left:359px;top:270px" width="9" height="6" viewBox="0 0 9 6"><path d="M1 1 L4.500 4.500 L8 1" fill="none" stroke="#555" stroke-width="1.100"/></svg>
<svg class="chev" style="left:359px;top:294px" width="9" height="6" viewBox="0 0 9 6"><path d="M1 1 L4.500 4.500 L8 1" fill="none" stroke="#555" stroke-width="1.100"/></svg>
<svg class="chev" style="left:358px;top:368px" width="9" height="6" viewBox="0 0 9 6"><path d="M1 1 L4.500 4.500 L8 1" fill="none" stroke="#555" stroke-width="1.100"/></svg>
<!-- toolbox grips -->
<div class="a hgrip" style="left:2px;top:74.500px;width:24px"></div>
<div class="a hgrip" style="left:2px;top:505px;width:24px"></div>
<!-- selected tool -->
<div class="a" style="left:2px;top:86px;width:23px;height:19px;background:#cbe3f7;border:1px solid #a9d1f2"></div>
<!-- brush -->
<svg style="left:8px;top:89px" width="15" height="15" viewBox="0 0 15 15"><path d="M14.300 0.700 L13.300 0.500 L4.800 8.600 L6.600 10.400 L14.700 2 Z" fill="#34475a"/><path d="M5.200 8.200 L3 10.400 L4.800 12.200 L7 10 Z" fill="#dfe8f0" stroke="#7f8d9a" stroke-width="0.500"/><path d="M3.200 10.600 L0.500 14.300 L4.600 12 Z" fill="#2c3c4c"/></svg>
<!-- move -->
<svg style="left:7px;top:109.500px" width="13" height="13" viewBox="0 0 13 13"><path d="M6.500 0 L9.300 3 L7.600 3 L7.600 5.400 L10 5.400 L10 3.700 L13 6.500 L10 9.300 L10 7.600 L7.600 7.600 L7.600 10 L9.300 10 L6.500 13 L3.700 10 L5.400 10 L5.400 7.600 L3 7.600 L3 9.300 L0 6.500 L3 3.700 L3 5.400 L5.400 5.400 L5.400 3 L3.700 3 Z" fill="#6c6c6c"/><path d="M3.200 1.900 L1.900 3.200 M9.800 1.900 L11.100 3.200 M3.200 11.100 L1.900 9.800 M9.800 11.100 L11.100 9.800" stroke="#9a9a9a" stroke-width="1.300"/><path d="M6.500 1 L11.800 6.500 L6.500 12 L1.200 6.500 Z" fill="#7a7a7a" opacity="0.550"/><path d="M3 13.200 L10 13.200" stroke="#d4d4d4" stroke-width="0.800"/></svg>
<!-- rect select -->
<svg style="left:8px;top:131px" width="12" height="12" viewBox="0 0 12 12"><rect x="0.700" y="0.700" width="10.600" height="10.600" fill="#c9c9c9" stroke="#3c3c3c" stroke-width="1.400" stroke-dasharray="1.600 1.050" stroke-dashoffset="0.800"/></svg>
<!-- wand -->
<svg style="left:8px;top:151px" width="13" height="13" viewBox="0 0 13 13"><path d="M1 12 L8.600 4.400" stroke="#1e1e1e" stroke-width="2.800" stroke-linecap="butt"/><path d="M8.400 4.600 L11.600 1.400" stroke="#8e8e8e" stroke-width="3.400"/><path d="M8.800 4.200 L11.200 1.800" stroke="#fafafa" stroke-width="2.200"/><path d="M6.300 1 L6.800 2 M12 4.600 L12.800 5" stroke="#b0b0b0" stroke-width="0.700"/><path d="M3 13 L9 13" stroke="#d8d8d8" stroke-width="0.800"/></svg>
<!-- lasso -->
<svg style="left:7px;top:170px" width="15" height="14" viewBox="0 0 15 14"><ellipse cx="7.800" cy="5" rx="6.300" ry="3.700" transform="rotate(-12 7.800 5)" fill="none" stroke="#7e7e7e" stroke-width="1.500"/><path d="M4 8.500 Q2.200 9.500 3.400 10.800 Q4.800 10.500 4 8.500 M3.400 10.800 L2.600 13" fill="none" stroke="#8a8a8a" stroke-width="1.100"/></svg>
<!-- crop -->
<svg style="left:7px;top:192px" width="14" height="13" viewBox="0 0 14 13"><path d="M3 0.500 L3 9.500 L13 9.500" fill="none" stroke="#666" stroke-width="1.350"/><path d="M0.500 3 L10 3 L10 12.300" fill="none" stroke="#666" stroke-width="1.350"/><rect x="4" y="4" width="5" height="4.500" fill="#f4f4f4"/><path d="M10.500 10 L13 12.500" stroke="#888" stroke-width="1.200"/></svg>
<div class="a" style="left:3px;top:211px;width:22px;height:1px;background:#a8a8a8"></div>
<!-- perspective grid -->
<svg style="left:8px;top:218px" width="12" height="11" viewBox="0 0 12 11"><path d="M2.800 0.500 L9.200 0.500 L11.700 10.500 L0.300 10.500 Z" fill="#f4f4f4" stroke="#8a8a8a" stroke-width="1"/><path d="M2 3.700 L10 3.700 M1.200 7 L10.800 7 M5 0.500 L4 10.500 M7 0.500 L8 10.500" stroke="#8a8a8a" stroke-width="1"/></svg>
<!-- T -->
<svg style="left:8px;top:239px" width="12" height="12" viewBox="0 0 12 12"><path d="M0.300 0.300 L11.700 0.300 L11.700 3.800 L10.300 3.800 L9.600 2 L7.600 2 L7.600 9.600 L9.300 10.200 L9.300 11.500 L2.700 11.500 L2.700 10.200 L4.400 9.600 L4.400 2 L2.400 2 L1.700 3.800 L0.300 3.800 Z" fill="#1c1c1c"/></svg>
<!-- shape -->
<svg style="left:8px;top:259px" width="12" height="12" viewBox="0 0 12 12"><defs><linearGradient id="shg" x1="0" y1="0" x2="0" y2="1"><stop offset="0" stop-color="#f2f2f2"/><stop offset="1" stop-color="#d4d4d4"/></linearGradient></defs><rect x="0.500" y="0.500" width="11" height="11" rx="1.300" fill="url(#shg)" stroke="#b0b0b0" stroke-width="1"/><path d="M2 9.500 L6 5.500 L10 9.500 Z" fill="#d0d0d0" opacity="0.600"/></svg>
<!-- gradient -->
<svg style="left:8px;top:280px" width="12" height="12" viewBox="0 0 12 12"><defs><linearGradient id="grg" x1="0" y1="0" x2="1" y2="0"><stop offset="0" stop-color="#000"/><stop offset="0.250" stop-color="#1c1c1c"/><stop offset="0.850" stop-color="#f4f4f4"/><stop offset="1" stop-color="#fff"/></linearGradient></defs><rect x="0.500" y="0.500" width="11" height="11" rx="1.500" fill="url(#grg)" stroke="#7a7a7a" stroke-width="0.800"/></svg>
<div class="a" style="left:3px;top:297px;width:22px;height:1px;background:#a8a8a8"></div>
<!-- eraser -->
<svg style="left:7px;top:303px" width="15" height="14" viewBox="0 0 15 14"><g transform="rotate(-42 7.500 7)"><rect x="0.300" y="3.700" width="14.400" height="6.600" rx="1.600" fill="#f2f2f2" stroke="#a4a4a4" stroke-width="0.900"/><rect x="9.800" y="4.200" width="4.400" height="5.600" rx="1.200" fill="#cfcfcf"/><path d="M9.800 4 L9.800 10" stroke="#a4a4a4" stroke-width="0.800"/></g></svg>
<!-- stamp -->
<svg style="left:7px;top:325px" width="13" height="12" viewBox="0 0 13 12"><circle cx="6.500" cy="2.900" r="2.700" fill="#aaaaaa"/><circle cx="6" cy="2.300" r="1" fill="#d0d0d0"/><rect x="5.300" y="4.500" width="2.400" height="3" fill="#7c7c7c"/><path d="M0.500 10 Q0.500 7 3 7 L10 7 Q12.500 7 12.500 10 Z" fill="#6a6a6a"/><rect x="0.500" y="9.800" width="12" height="1.800" fill="#4a4a4a"/></svg>
<!-- eyedropper -->
<svg style="left:8px;top:345px" width="13" height="13" viewBox="0 0 13 13"><path d="M8.400 4.600 L2.600 10.400 L0.600 12.600 L1.400 9.600 L7.200 3.600 Z" fill="#e2e2e2" stroke="#8c8c8c" stroke-width="0.900"/><path d="M11.500 1.500 L9 4" stroke="#4c4c4c" stroke-width="3" stroke-linecap="round"/><path d="M7 3 L10 6" stroke="#484848" stroke-width="1.900" stroke-linecap="round"/><path d="M3 12.800 L10 12.800" stroke="#d6d6d6" stroke-width="0.800"/></svg>
<!-- bucket -->
<svg style="left:7px;top:365px" width="15" height="14" viewBox="0 0 15 14"><defs><linearGradient id="bkg" x1="0" y1="0" x2="1" y2="1"><stop offset="0" stop-color="#f0f0f0"/><stop offset="1" stop-color="#8c8c8c"/></linearGradient></defs><g transform="rotate(-38 6.500 7.500)"><rect x="2.300" y="3.500" width="8.400" height="9" rx="1" fill="url(#bkg)" stroke="#7c7c7c" stroke-width="0.900"/><ellipse cx="6.500" cy="3.700" rx="4.200" ry="1.500" fill="#f4f4f4" stroke="#7c7c7c" stroke-width="0.800"/></g><path d="M5 0.500 Q7.200 2.500 6.800 6.500" fill="none" stroke="#6a6a6a" stroke-width="0.900"/><circle cx="6.800" cy="6.500" r="0.900" fill="#888"/><path d="M10.300 5 Q14.600 6.500 13.600 12.800 Q12.600 9.500 10 7.500 Z" fill="#333"/></svg>
<div class="a" style="left:3px;top:384px;width:22px;height:1px;background:#a8a8a8"></div>
<!-- zoom -->
<svg style="left:8px;top:390px" width="14" height="14" viewBox="0 0 14 14"><circle cx="8.300" cy="5.300" r="4.300" fill="#f6f6f6" stroke="#8c8c8c" stroke-width="1.200"/><path d="M5.200 8.500 L1 12.600" stroke="#8a8a8a" stroke-width="1.900" stroke-linecap="round"/></svg>
<!-- hand -->
<svg style="left:8px;top:411px" width="12" height="13" viewBox="0 0 12 13"><path d="M3 7.500 L3 2.600 Q3 1.600 3.900 1.600 Q4.800 1.600 4.800 2.600 L4.800 1.300 Q4.800 0.400 5.700 0.400 Q6.700 0.400 6.700 1.300 L6.700 2 Q6.700 1.200 7.600 1.200 Q8.500 1.200 8.500 2.200 L8.500 3.500 Q8.600 2.800 9.500 2.800 Q10.400 2.800 10.400 3.800 L10.400 8.500 Q10.400 12.500 7 12.500 L6 12.500 Q4 12.500 2.500 10 L0.600 7.200 Q0.300 6.200 1.100 6 Q2 5.800 3 7.500 Z" fill="#dadada" stroke="#7e7e7e" stroke-width="0.900"/><path d="M4.800 2.500 L4.800 6.500 M6.700 2 L6.700 6.500 M8.500 3.500 L8.500 6.500" stroke="#7e7e7e" stroke-width="0.800"/><path d="M4 8 Q6.500 7 9.500 8.500 L9 11 Q6.500 12 4.500 10.500 Z" fill="#a8a8a8" opacity="0.700"/></svg>
<!-- fg/bg swatches -->
<div class="a" style="left:1px;top:471px;width:20px;height:18px;background:#fff;border:1px solid #c0c0c0"></div>
<div class="a" style="left:10px;top:481px;width:18px;height:17px;background:#000;border:1px solid #e05a5a;box-shadow:0 0 0 0.500px #f0c0c0"></div>
<svg style="left:19px;top:472px" width="8" height="8" viewBox="0 0 8 8"><rect x="2.500" y="2.500" width="5" height="5" fill="#fff" stroke="#999" stroke-width="0.700"/><rect x="0.500" y="0.500" width="5" height="5" fill="#333" stroke="#666" stroke-width="0.700"/></svg>
<svg style="left:1px;top:489px" width="9" height="9" viewBox="0 0 10 9"><path d="M1 3 L3.500 0.500 L3.500 2 L6 2 L6 4 L3.500 4 L3.500 5.500 Z" fill="#d8d8d8" stroke="#777" stroke-width="0.700"/><path d="M9 6 L6.500 8.500 L6.500 7 L4 7 L4 5 L6.500 5 L6.500 3.500 Z" fill="#d8d8d8" stroke="#777" stroke-width="0.700"/></svg>
<div class="a" style="left:0px;top:501px;width:29px;height:1px;background:#dcdcdc"></div>
<div class="a" style="left:0px;top:502px;width:29px;height:1px;background:#fdfdfd"></div>
<!-- texture dropdown -->
<svg style="left:2px;top:517px" width="15" height="16" viewBox="0 0 15 16"><rect x="0" y="0" width="15" height="16" fill="#808080" filter="url(#nz)"/></svg>

<div class="a" style="left:17px;top:517px;width:10px;height:16px;background:#ececec;border:1px solid #c8c8c8"></div>
<svg style="left:19px;top:523px" width="6" height="4" viewBox="0 0 6 4"><path d="M0.300 0.300 L5.700 0.300 L3 3.700 Z" fill="#111"/></svg>


</body></html>
